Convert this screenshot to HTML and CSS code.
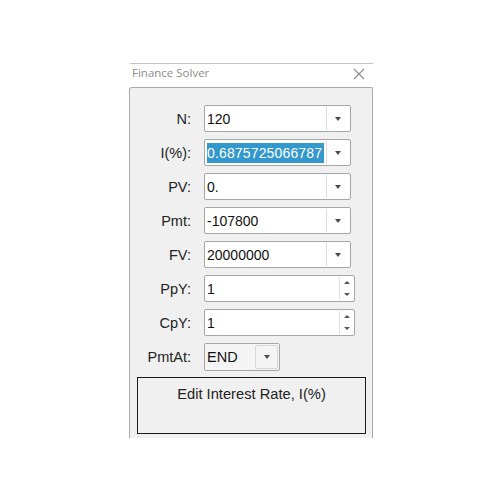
FILE: index.html
```html
<!DOCTYPE html>
<html>
<head>
<meta charset="utf-8">
<link rel="stylesheet" href="styles.css">
</head>
<body>
<div class="window">
  <div class="titlebar">
    <span class="title">Finance Solver</span>
    <svg class="close" width="12" height="12" viewBox="0 0 12 12"><path d="M1 1L11 11M11 1L1 11" stroke="#8a8a8a" stroke-width="1.1" fill="none"/></svg>
  </div>
  <div class="panel">
    <div class="form">
      <div class="label">N:</div>
      <div class="combo"><span class="val">120</span><span class="btn"><i class="arrow"></i></span></div>
      <div class="label">I(%):</div>
      <div class="combo"><span class="val"><span class="sel">0.6875725066787</span></span><span class="btn"><i class="arrow"></i></span></div>
      <div class="label">PV:</div>
      <div class="combo"><span class="val">0.</span><span class="btn"><i class="arrow"></i></span></div>
      <div class="label">Pmt:</div>
      <div class="combo"><span class="val">-107800</span><span class="btn"><i class="arrow"></i></span></div>
      <div class="label">FV:</div>
      <div class="combo"><span class="val">20000000</span><span class="btn"><i class="arrow"></i></span></div>
      <div class="label">PpY:</div>
      <div class="spin"><span class="val">1</span><span class="spinbtns"><i class="up"></i><i class="down"></i></span></div>
      <div class="label">CpY:</div>
      <div class="spin"><span class="val">1</span><span class="spinbtns"><i class="up"></i><i class="down"></i></span></div>
      <div class="label">PmtAt:</div>
      <div class="combo small"><span class="val">END</span><span class="btn grey"><i class="arrow"></i></span></div>
    </div>
    <div class="message">Edit Interest Rate, I(%)</div>
  </div>
</div>
</body>
</html>
```
FILE: styles.css
```css
html, body {
  margin: 0;
  padding: 0;
  background: #ffffff;
  font-family: "Liberation Sans", Arial, sans-serif;
}
.window {
  margin-left: 129px;
  padding-top: 63px;
  width: 244px;
}
.titlebar {
  margin-left: 1px;
  border-top: 1px solid #c4c4c4;
  height: 23px;
  display: flex;
  align-items: flex-start;
  justify-content: space-between;
  padding: 0 8px 0 2px;
}
.title {
  font-family: "Open Sans", "Noto Sans", sans-serif;
  font-size: 11.5px;
  color: #8c8c8c;
  margin-top: 1px;
}
.close {
  display: block;
  margin-top: 4px;
}
.panel {
  height: 351px;
  box-sizing: border-box;
  background: #f0f0f0;
  border: 1px solid #a9a9a9;
  border-bottom: none;
  border-top-left-radius: 3px;
  border-top-right-radius: 2px;
  padding: 17px 6px 0 7px;
}
.form {
  display: grid;
  grid-template-columns: 54px auto;
  column-gap: 13px;
  row-gap: 7px;
  align-items: center;
  justify-items: start;
}
.label {
  justify-self: end;
  font-size: 14.5px;
  color: #222;
}
.combo, .spin {
  height: 27px;
  box-sizing: border-box;
  background: #fff;
  border: 1px solid #a6a6a6;
  border-radius: 2px;
  display: flex;
  align-items: center;
  font-size: 14px;
  color: #111;
}
.combo { width: 147px; }
.spin { width: 151px; }
.combo.small { width: 76px; height: 28px; background: #f4f4f4; font-size: 14.5px; }
.val {
  flex: 1;
  padding-left: 2px;
  white-space: nowrap;
  overflow: hidden;
}
.sel {
  background: #3399cc;
  color: #fff;
  display: inline-block;
  line-height: 20px;
  padding-right: 2px;
  letter-spacing: 0.15px;
}
.btn {
  width: 23px;
  height: 23px;
  margin-right: 1px;
  box-sizing: border-box;
  border-left: 1px solid #dcdcdc;
  display: flex;
  align-items: center;
  justify-content: center;
  background: #fff;
}
.btn.grey {
  background: #f4f4f4;
  border: 1px solid #d6d6d6;
  border-radius: 2px;
  height: 24px;
  margin-right: 1px;
}
.arrow {
  width: 0;
  height: 0;
  border-left: 3.5px solid transparent;
  border-right: 3.5px solid transparent;
  border-top: 4px solid #4a4a4a;
}
.spinbtns {
  width: 13px;
  height: 23px;
  margin-right: 1px;
  display: flex;
  flex-direction: column;
  align-items: center;
  justify-content: space-around;
  border-left: 1px solid #e2e2e2;
}
.up, .down {
  width: 0;
  height: 0;
  border-left: 3px solid transparent;
  border-right: 3px solid transparent;
}
.up { border-bottom: 3px solid #555; }
.down { border-top: 3px solid #555; }
.message {
  margin-top: 6px;
  height: 57px;
  width: 229px;
  box-sizing: border-box;
  border: 1px solid #1a1a1a;
  text-align: center;
  font-size: 14.7px;
  color: #222;
  padding-top: 8px;
}
```
